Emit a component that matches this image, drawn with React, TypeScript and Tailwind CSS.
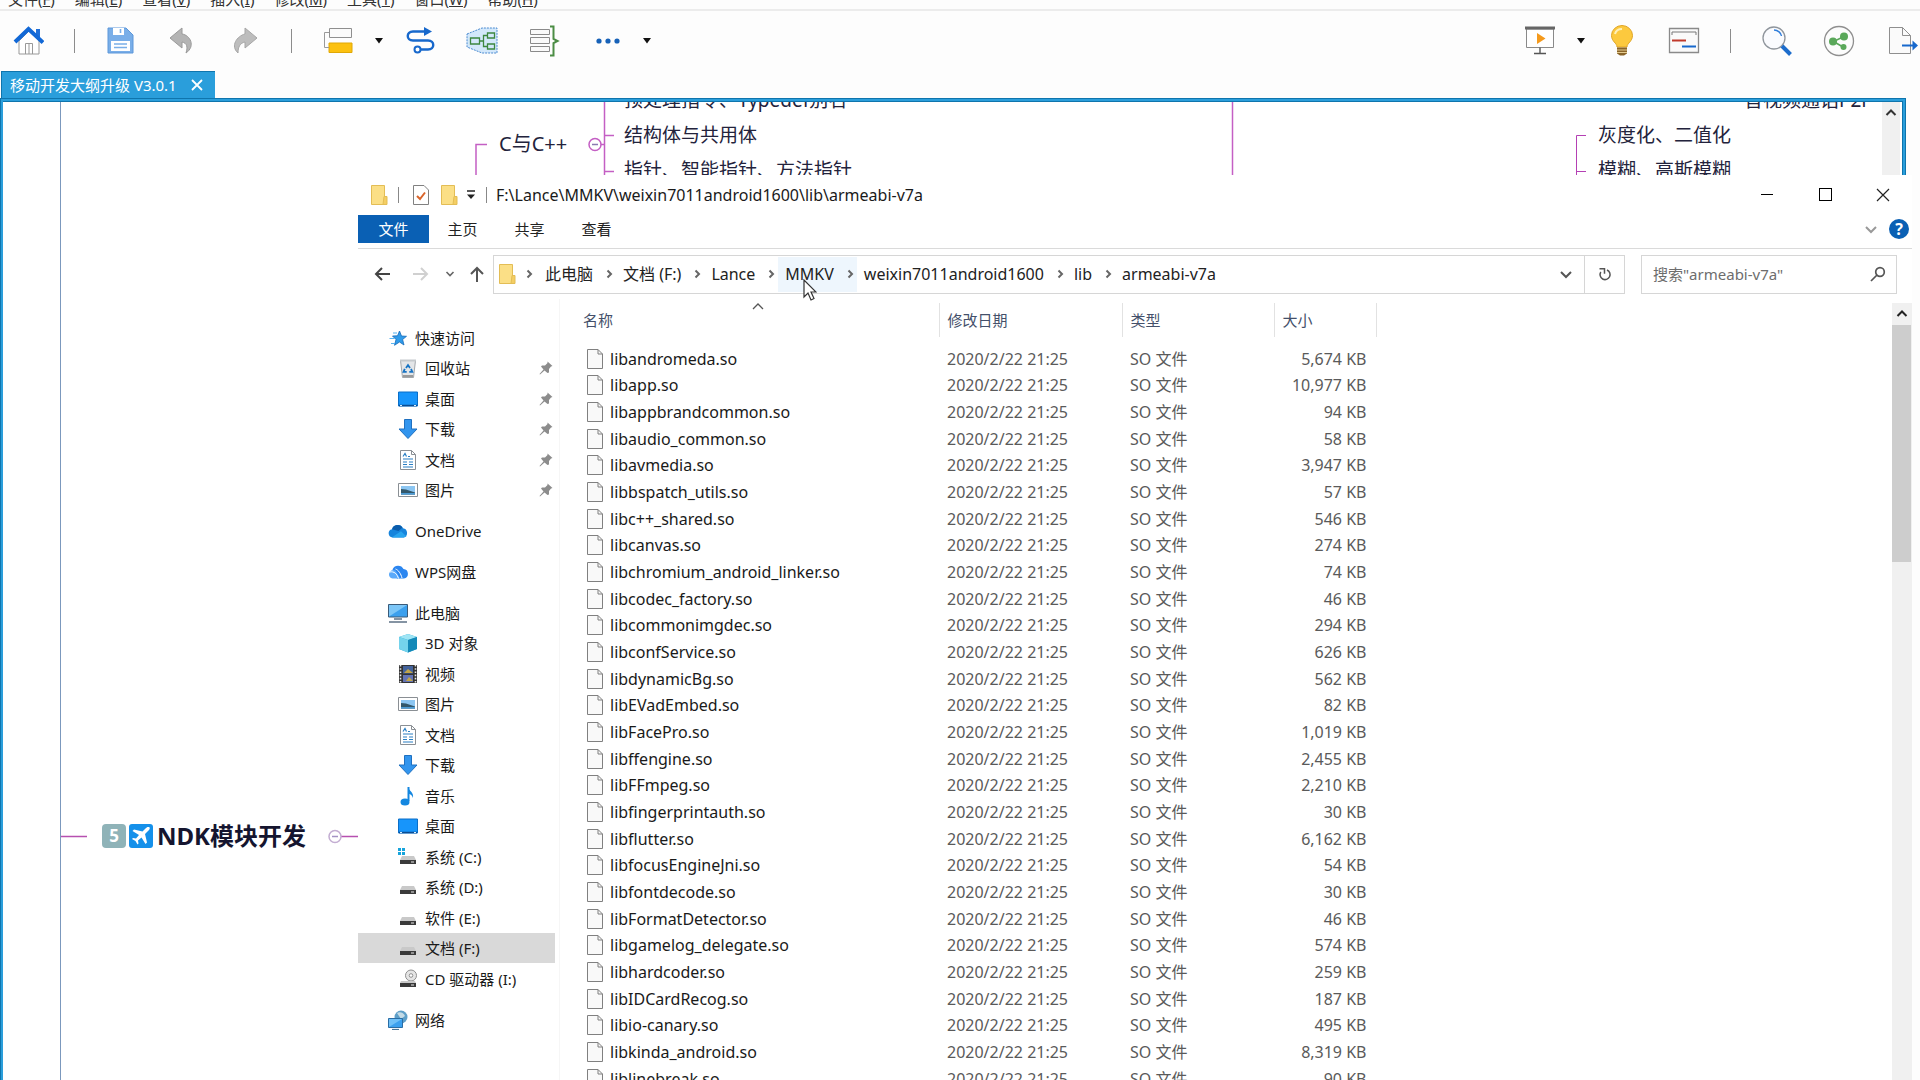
import type { ReactNode } from "react";

const menus = [
  ["文件", "F"],
  ["编辑", "E"],
  ["查看", "V"],
  ["插入", "I"],
  ["修改", "M"],
  ["工具", "T"],
  ["窗口", "W"],
  ["帮助", "H"],
];

const files = [
  ["libandromeda.so", "5,674"],
  ["libapp.so", "10,977"],
  ["libappbrandcommon.so", "94"],
  ["libaudio_common.so", "58"],
  ["libavmedia.so", "3,947"],
  ["libbspatch_utils.so", "57"],
  ["libc++_shared.so", "546"],
  ["libcanvas.so", "274"],
  ["libchromium_android_linker.so", "74"],
  ["libcodec_factory.so", "46"],
  ["libcommonimgdec.so", "294"],
  ["libconfService.so", "626"],
  ["libdynamicBg.so", "562"],
  ["libEVadEmbed.so", "82"],
  ["libFacePro.so", "1,019"],
  ["libffengine.so", "2,455"],
  ["libFFmpeg.so", "2,210"],
  ["libfingerprintauth.so", "30"],
  ["libflutter.so", "6,162"],
  ["libfocusEngineJni.so", "54"],
  ["libfontdecode.so", "30"],
  ["libFormatDetector.so", "46"],
  ["libgamelog_delegate.so", "574"],
  ["libhardcoder.so", "259"],
  ["libIDCardRecog.so", "187"],
  ["libio-canary.so", "495"],
  ["libkinda_android.so", "8,319"],
  ["liblinebreak.so", "90"],
];

type SideItem = { label: string; icon: string; pinned?: boolean; selected?: boolean };

// the first item of every group is its root, the others are indented
const groups: SideItem[][] = [
  [
    { label: "快速访问", icon: "star" },
    { label: "回收站", icon: "bin", pinned: true },
    { label: "桌面", icon: "desktop", pinned: true },
    { label: "下载", icon: "download", pinned: true },
    { label: "文档", icon: "doc", pinned: true },
    { label: "图片", icon: "picture", pinned: true },
  ],
  [{ label: "OneDrive", icon: "onedrive" }],
  [{ label: "WPS网盘", icon: "wps" }],
  [
    { label: "此电脑", icon: "pc" },
    { label: "3D 对象", icon: "cube" },
    { label: "视频", icon: "video" },
    { label: "图片", icon: "picture" },
    { label: "文档", icon: "doc" },
    { label: "下载", icon: "download" },
    { label: "音乐", icon: "music" },
    { label: "桌面", icon: "desktop" },
    { label: "系统 (C:)", icon: "windrive" },
    { label: "系统 (D:)", icon: "drive" },
    { label: "软件 (E:)", icon: "drive" },
    { label: "文档 (F:)", icon: "drive", selected: true },
    { label: "CD 驱动器 (I:)", icon: "cd" },
  ],
  [{ label: "网络", icon: "network" }],
];

const crumbs = ["此电脑", "文档 (F:)", "Lance", "MMKV", "weixin7011android1600", "lib", "armeabi-v7a"];

function Drive() {
  return (
    <>
      <path d="M4 9h12l2 4H2z" fill="#c9c9c9" />
      <path d="M2 13h16v4H2z" fill="#3a3a3a" />
      <path d="M13 15h3" stroke="#e8e8e8" />
    </>
  );
}

const sideIcons: Record<string, ReactNode> = {
  star: (
    <>
      <path d="M11.500 3l2 5 5 .3-3.9 3.200 1.400 5.500-4.500-3-5 3.300 1.500-5.800L4.500 8l5-.2z" fill="#2f9bea" stroke="#1669b8" strokeWidth="0.8" />
      <path d="M5 5h4M1.500 10.500h5M3 15.500h4" stroke="#57b2f0" strokeWidth="1.2" />
    </>
  ),
  bin: (
    <>
      <path d="M2.500 2.500h15l-2 17h-11z" fill="#e4e6e8" stroke="#a3a7ab" />
      <path d="M2 1.500h16v2H2z" fill="#c5c9cc" />
      <path d="M8 10l2-3 2 3M13 11l1.300 2.800h-3M6.800 10.800l-1.300 3h3.200" fill="none" stroke="#1673c4" strokeWidth="1.800" />
      <path d="M5 18h10" stroke="#9b9b9b" strokeWidth="2" />
    </>
  ),
  desktop: (
    <>
      <path d="M.500 3h19v14H.500z" fill="#1795fb" stroke="#0b6fc8" />
      <path d="M1 16.500h18" stroke="#0b4c92" strokeWidth="1.5" />
      <path d="M2 16.500h2M16 16.500h2" stroke="#d8efff" />
    </>
  ),
  download: <path d="M6.500.500h7v9.500h5.500L10 19.500 1 10h5.500z" fill="#3295ee" stroke="#1f70c0" />,
  doc: (
    <>
      <path d="M2.500.500h11l4 4v15h-15z" fill="#fff" stroke="#8a8f94" />
      <path d="M13.500.500v4h4" fill="none" stroke="#8a8f94" />
      <path d="M5 6.500l2-3 1.500 3M10 6.500h2M5 9h10M5 12h4M11 12h4M5 14.500h4M11 14.500h4M5 17h10" fill="none" stroke="#2a7fc4" strokeWidth="1.200" />
    </>
  ),
  picture: (
    <>
      <path d="M.500 3.500h19v13H.500z" fill="#fff" stroke="#8a8f94" />
      <path d="M3 6h14v8.500H3z" fill="#8cc6f2" />
      <path d="M3 9l5 .500 9 3v2H3z" fill="#33586b" />
      <path d="M3 13h14v1.500H3z" fill="#4b9bd6" />
    </>
  ),
  onedrive: (
    <>
      <path d="M4.500 16.500a4.200 4.200 0 0 1-.500-8.300 6 6 0 0 1 11-1 4.800 4.800 0 0 1 .800 9.300z" fill="#1684dc" />
      <path d="M4 8.200a6 6 0 0 1 10.500-1.800l-4 3.600z" fill="#0a5cab" />
      <path d="M4 16.300l9-6 5.500 5.200-2.700 1H5z" fill="#28a4ee" />
    </>
  ),
  wps: (
    <>
      <path d="M9 16.500L4.500 7.500a6 6 0 0 1 11-.500 4.800 4.800 0 0 1 .500 9.500z" fill="#2b86f0" />
      <path d="M1 12a4.500 4.500 0 0 1 6.500-3.500L12 16.500H4.500A4 4 0 0 1 1 12z" fill="#5aa9fa" />
      <path d="M1.500 10c5-1 7.500 2 9 6.500M7.500 7c3 1 5.500 5 6.500 9" fill="none" stroke="#fff" strokeWidth="1" />
    </>
  ),
  pc: (
    <>
      <path d="M.500 1.500h19v12.500H.500z" fill="#3ba0ee" stroke="#3a5a78" />
      <path d="M1 2h18L1 13.500z" fill="#7cc6f7" />
      <path d="M6 16h8M1 19h18" stroke="#5d7285" strokeWidth="1.3" />
    </>
  ),
  cube: (
    <>
      <path d="M1 4l9-3 9 3v12l-9 3.500L1 16z" fill="#28a8d4" />
      <path d="M1 4l9 3 9-3-9-3z" fill="#9fe5f5" />
      <path d="M1 4l9 3v12.500L1 16z" fill="#74d3ec" />
      <path d="M10 7l9-3v12l-9 3.500z" fill="#1489b8" />
    </>
  ),
  video: (
    <>
      <path d="M1 1h18v18H1z" fill="#333" />
      <path d="M2.500 1v18M17.500 1v18" stroke="#e8e8e8" strokeWidth="1.6" strokeDasharray="1.6 1.6" />
      <path d="M5 2h10v7.500H5z" fill="#44639c" />
      <path d="M5 11h10v7H5z" fill="#6474b4" />
      <path d="M6 9l4-4 5 4zM8 17l3-4 4 4z" fill="#c2a548" />
    </>
  ),
  music: (
    <>
      <path d="M10.500 1v14" stroke="#1487e0" strokeWidth="2" />
      <path d="M10 1c1 4 6 5 5 11-1-3-3-4-5-4.500z" fill="#1487e0" />
      <ellipse cx="7" cy="16" rx="4.500" ry="3.500" fill="#1487e0" />
    </>
  ),
  drive: <Drive />,
  windrive: (
    <>
      <Drive />
      <path d="M0 1h3v3H0zM4 1h3v3H4zM0 5h3v3H0zM4 5h3v3H4z" fill="#16a4dc" />
    </>
  ),
  cd: (
    <>
      <circle cx="13" cy="6.500" r="5.500" fill="#e5e5e5" stroke="#8f8f8f" />
      <circle cx="13" cy="6.500" r="1.800" fill="#fff" stroke="#8f8f8f" />
      <path d="M3 12h14l1 2H2z" fill="#c9c9c9" />
      <path d="M2 14h16v4H2z" fill="#3a3a3a" />
      <path d="M13 16h3" stroke="#e8e8e8" />
    </>
  ),
  network: (
    <>
      <circle cx="13" cy="7" r="6.500" fill="#5e9fc8" />
      <path d="M9 3c3-2 7 0 8 3l-4 3z" fill="#c4dbe6" />
      <path d="M.500 8.500h14v9H.500z" fill="#3ba0ee" stroke="#2a6da4" />
      <path d="M1 9h13L1 17z" fill="#6fc0f7" />
      <path d="M4 19.500h7" stroke="#4a7597" strokeWidth="1.2" />
    </>
  ),
};

function ToolButton({ label, children }: { label: string; children: ReactNode }) {
  return (
    <button aria-label={label} className="size-8 shrink-0">
      <svg viewBox="0 0 32 32" className="size-8" fill="none">
        {children}
      </svg>
    </button>
  );
}

function Caret({ label }: { label: string }) {
  return (
    <button aria-label={label} className="-mx-[10px] w-[10px] shrink-0">
      <svg viewBox="0 0 10 6" className="h-[6px] w-[10px]">
        <path d="M1 0h8L5 5.500z" fill="#111" />
      </svg>
    </button>
  );
}

function Separator() {
  return <span className="h-6 w-px shrink-0 bg-[#8c8c8c]" />;
}

function Folder() {
  return (
    <svg viewBox="0 0 18 22" className="h-[22px] w-[18px] shrink-0">
      <path d="M1.500 1.500h13v19h-13z" fill="#fbdf86" stroke="#e3bd55" />
      <path d="M14 12.500h3v8h-4z" fill="#f4ce63" stroke="#e3bd55" />
    </svg>
  );
}

function Chevron({ dir, className = "" }: { dir: "up" | "down" | "right"; className?: string }) {
  const d = { up: "M2.500 9L7 4.500 11.500 9", down: "M2 5l5 5 5-5", right: "M5.500 3.500L9 7l-3.500 3.500" }[dir];
  return (
    <svg viewBox="0 0 14 14" className={`size-[14px] shrink-0 ${className}`} fill="none" stroke="currentColor">
      <path d={d} strokeWidth="2" />
    </svg>
  );
}

function Toolbar() {
  return (
    <div className="flex h-[60px] shrink-0 items-center justify-between pl-3">
      <div className="flex items-center gap-[30px]">
        <ToolButton label="主页">
          <path d="M7 16v13h20V16L17 6z" fill="#fff" stroke="#999" />
          <path d="M13.500 29V18.500h7V29M17 18.500V29" stroke="#999" />
          <path d="M24 4h4v8h-4z" fill="#1f6fd8" />
          <path d="M3 17L16.500 4 31 17.500" stroke="#1268d6" strokeWidth="4" />
        </ToolButton>
        <Separator />
        <ToolButton label="保存">
          <path d="M3 3h18l7 7v18H3z" fill="#79aee8" stroke="#5c97da" />
          <path d="M8 3h11v7H8zM6 16h19v10H6z" fill="#fff" />
          <path d="M15.500 4v4M9 19h13M9 22.500h13" stroke="#79aee8" strokeWidth="1.6" />
        </ToolButton>
        <ToolButton label="撤销">
          <path d="M3 13L15 3v6c8 1 14 12 4 19 2-6 1-10-4-11v6z" fill="#b4b4b4" stroke="#9a9a9a" />
        </ToolButton>
        <ToolButton label="重做">
          <path d="M28 13L16 3v6C8 11 1 21 9 28c0-6 2-10 7-11v6z" fill="#bdbdbd" stroke="#a6a6a6" />
        </ToolButton>
        <Separator />
        <ToolButton label="主题">
          <path d="M7.500 3.500h22v9h-22z" fill="#fafafa" stroke="#8f8f8f" />
          <path d="M7 18h23v9.500H7z" fill="#fcc110" stroke="#e0a806" />
          <path d="M7 7.500H2.500v15H7" stroke="#9a9a9a" />
        </ToolButton>
        <Caret label="主题选项" />
        <ToolButton label="联系">
          <path d="M24 6.500H9c-7 0-7 9 0 9h15c7 0 7 9 0 9h-8" stroke="#1768cc" strokeWidth="2.400" />
          <path d="M20 2l8 4.500-8 4.500z" fill="#1768cc" />
          <circle cx="13.500" cy="24.500" r="3" fill="#fff" stroke="#1768cc" strokeWidth="2" />
        </ToolButton>
        <ToolButton label="外框">
          <path d="M1 9L16 3h15v25H16L1 22z" fill="#d3e8fb" stroke="#4a8ad0" strokeDasharray="2 1" />
          <path d="M4.500 13h9v6h-9zM21.500 8h7v5h-7zM21.500 19h7v5h-7zM13.500 16h4M21 10.500h-3.500v11H21" stroke="#3d8740" strokeWidth="1.300" />
        </ToolButton>
        <ToolButton label="概要">
          <path d="M2.500 4.500h19v5h-19zM2.500 12.500h19v6h-19zM2.500 21.500h19v5h-19z" fill="#fafafa" stroke="#8a8a8a" />
          <path d="M22 1.500h3.500v12.500l4 2-4 2v12.500H22" stroke="#4c8d45" strokeWidth="2" />
        </ToolButton>
        <ToolButton label="更多">
          <circle cx="9" cy="16" r="2.600" fill="#1762b8" />
          <circle cx="18" cy="16" r="2.600" fill="#1762b8" />
          <circle cx="27" cy="16" r="2.600" fill="#1762b8" />
        </ToolButton>
        <Caret label="更多选项" />
      </div>
      <div className="flex items-center gap-[30px]">
        <ToolButton label="演示">
          <path d="M2.500 4h27v18.500h-27z" fill="#fff" stroke="#8a8a8a" />
          <path d="M1 1.500h30v3H1z" fill="#666" />
          <path d="M13 8l8.500 5.500L13 19z" fill="#f59a1c" />
          <path d="M16 22.500v6M10 28.500h12" stroke="#555" strokeWidth="1.400" />
        </ToolButton>
        <Caret label="演示选项" />
        <ToolButton label="头脑风暴">
          <path d="M11 22c0-4-5.500-5.500-5.500-11.500a10.500 10 0 0 1 21 0C26.500 16.500 21 18 21 22z" fill="#fcc93e" stroke="#e0a526" />
          <path d="M9 9c1-4 4-5 7-5" stroke="#fff0b8" strokeWidth="2" />
          <path d="M11 22.500h10v6l-3 2h-4l-3-2z" fill="#8a6428" />
          <path d="M11 25h10M11 27.500h10" stroke="#e5cc90" />
        </ToolButton>
        <ToolButton label="甘特图">
          <path d="M1.500 3.500h29v24h-29z" fill="#fafafa" stroke="#8a8a8a" strokeWidth="1.300" />
          <path d="M4 10V7h24v3" stroke="#777" />
          <path d="M4 15.500h14" stroke="#c0392b" strokeWidth="2" />
          <path d="M14 21.500h14" stroke="#1768cc" strokeWidth="2" />
        </ToolButton>
        <Separator />
        <ToolButton label="搜索">
          <circle cx="13" cy="13" r="11" fill="#fafbfe" stroke="#8f959c" strokeWidth="1.300" />
          <path d="M13 5c4 0 7 3 7.500 6" stroke="#2e7ddb" strokeWidth="1.400" />
          <path d="M21 21l8.500 8.500" stroke="#1d6dcc" strokeWidth="4" />
        </ToolButton>
        <div className="flex items-center gap-[33px]">
          <ToolButton label="分享">
            <circle cx="16" cy="16" r="14.500" fill="#fcfcfc" stroke="#8f8f8f" strokeWidth="1.300" />
            <path d="M21 11.500L10.500 16.500 20 22" stroke="#5aa85a" strokeWidth="1.600" />
            <circle cx="21" cy="11.500" r="4" fill="#5aa85a" />
            <circle cx="10" cy="16.500" r="4" fill="#5aa85a" />
            <circle cx="20.500" cy="22" r="3" fill="#5aa85a" />
          </ToolButton>
          <ToolButton label="导出">
            <path d="M1.500 2.500h13l8 8v18h-21z" fill="#fafafa" stroke="#8f8f8f" />
            <path d="M14.500 2.500v8h8" stroke="#8f8f8f" />
            <path d="M14 20.500h12" stroke="#1768cc" strokeWidth="2" />
            <path d="M24.500 15.500l5.500 5-5.500 5z" fill="#1768cc" />
          </ToolButton>
        </div>
      </div>
    </div>
  );
}

function MindMap() {
  return (
    <div className="absolute inset-0 overflow-hidden bg-white text-[19px] leading-7 text-[#23233c]">
      {/* branches */}
      <svg className="absolute inset-0 size-full" fill="none" stroke="#c45fc4">
        <path d="M57.500 0v2000" stroke="#7b98bd" />
        <path d="M58 734.500h26M338 734.500h40" stroke="#b650b0" strokeWidth="1.500" />
        <path d="M484 42.500h-11V200M601.500 0v200M602 33.500h9M602 69.500h9M587 42.500h14" strokeWidth="1.500" />
        <path d="M1229.500 0v200" strokeWidth="1.500" />
        <path d="M1583 33.500h-9.500V200M1574 69.500h9" stroke="#b440b4" />
        <circle cx="592" cy="42.500" r="6" fill="#fff" strokeWidth="1.500" />
        <path d="M589 42.500h6" stroke="#8a7ab0" strokeWidth="1.500" />
        <circle cx="332" cy="734.500" r="6" fill="#fff" stroke="#c3add2" strokeWidth="1.500" />
        <path d="M329 734.500h6" stroke="#a493c4" strokeWidth="1.500" />
      </svg>
      <span className="absolute left-[496px] top-7 whitespace-nowrap text-xl leading-7">C与C++</span>
      <ul className="absolute left-[621px] -top-4 whitespace-nowrap [&>li]:h-[35px]">
        <li>预处理指令、Typedef别名</li>
        <li>结构体与共用体</li>
        <li>指针、智能指针、方法指针</li>
      </ul>
      <span className="absolute left-[1741px] -top-4 whitespace-nowrap">音视频通话P2P</span>
      <ul className="absolute left-[1595px] top-[19px] whitespace-nowrap [&>li]:h-[35px]">
        <li>灰度化、二值化</li>
        <li>模糊、高斯模糊</li>
      </ul>
      <div className="absolute left-[99px] top-[720px] flex h-7 items-center gap-[3px]">
        <span className="flex size-6 items-center justify-center rounded bg-[#8fb3b8] text-[17px] font-bold text-white">5</span>
        <svg viewBox="0 0 24 24" className="size-6">
          <rect width="24" height="24" rx="3" fill="#1590ea" />
          <path d="M20.500 3.500c-1.500-1-3 0-4 1L13.500 7.500 5 5.500 3.500 7l6.500 4-3 3.500-3-.500-1 1 3.500 2 2 3.500 1-1-.500-3 3.500-3 4 6.500 1.500-1.500-2-8.500 3-3c1-1 2.500-2.500 1.500-4z" fill="#fff" />
        </svg>
        <span className="ml-px whitespace-nowrap text-2xl font-bold text-[#15152f]">NDK模块开发</span>
      </div>
      <div className="absolute inset-y-0 right-[2px] w-[18px] bg-[#f0f0f0]">
        <Chevron dir="up" className="mx-auto mt-1 text-[#333]" />
      </div>
    </div>
  );
}

function Sidebar() {
  return (
    <nav className="flex w-[202px] shrink-0 flex-col gap-[10px] border-r border-[#f6f6f6] pr-1 pt-[23px]">
      {groups.map((group, g) => (
        <ul key={g}>
          {group.map((item, i) => (
            <li key={i} className="odd:h-[31px] even:h-[30px]">
              <a
                href="#"
                className={`flex h-full items-center gap-[7px] whitespace-nowrap pr-[2px] ${i === 0 ? "pl-[30px]" : "pl-[40px]"} ${
                  item.selected ? "bg-[#d9d9d9]" : ""
                }`}
              >
                <svg viewBox="0 0 20 20" className="size-5 shrink-0" fill="none">
                  {sideIcons[item.icon]}
                </svg>
                <span className="flex-1">{item.label}</span>
                {item.pinned && (
                  <svg viewBox="0 0 14 14" className="size-[14px]">
                    <path d="M8.500.500L13.500 5l-1.500.500-2 2.500v3.500L8.500 12 5.500 9.500 1 13.500l-.500-.500L4.500 8.500 2 5.500 3 4.500h3L8.500 2z" fill="#8c8c8c" />
                  </svg>
                )}
              </a>
            </li>
          ))}
        </ul>
      ))}
    </nav>
  );
}

function FileTable() {
  return (
    <table className="ml-[15px] w-[802px] table-fixed border-collapse text-left">
      <thead className="text-[#44506a]">
        <tr className="h-[34px] [&>th]:border-r [&>th]:border-[#e2e2e2] [&>th]:pl-2 [&>th]:font-normal">
          <th className="relative w-[364px]">
            名称
            <svg viewBox="0 0 12 7" className="absolute left-[177px] top-0 h-[7px] w-3" fill="none">
              <path d="M1 6l5-5 5 5" stroke="#555" strokeWidth="1.300" />
            </svg>
          </th>
          <th className="w-[183px]">修改日期</th>
          <th className="w-[152px]">类型</th>
          <th>大小</th>
        </tr>
      </thead>
      <tbody className="text-base text-[#5a5a5a]">
        <tr className="h-2">
          <td colSpan={4} />
        </tr>
        {files.map(([name, size]) => (
          <tr key={name} className="h-[27px] nth-[3n]:h-[26px] [&>td]:p-0 [&>td]:leading-6">
            <td>
              <span className="flex items-center gap-[7px] pl-3 text-[#1a1a1a]">
                <svg viewBox="0 0 16 20" className="h-5 w-4 shrink-0">
                  <path d="M.500.500h10.500l4.500 4.500v14.500H.500z" fill="#f9f9f9" stroke="#808080" />
                  <path d="M11 .500v4.500h4.500" fill="none" stroke="#808080" />
                </svg>
                {name}
              </span>
            </td>
            <td>
              <span className="pl-2">2020/2/22 21:25</span>
            </td>
            <td>
              <span className="pl-2">SO 文件</span>
            </td>
            <td className="text-right">
              <span className="pr-[10px]">{size} KB</span>
            </td>
          </tr>
        ))}
      </tbody>
    </table>
  );
}

function Explorer() {
  return (
    <section className="absolute bottom-0 left-[358px] right-2 top-[175px] flex flex-col overflow-hidden bg-white">
      <header className="flex h-[39px] shrink-0 items-center">
        <div className="flex items-center pl-3">
          <Folder />
          <span className="ml-[10px] h-4 w-px bg-[#888]" />
          <svg viewBox="0 0 16 20" className="ml-[14px] h-5 w-4" fill="none">
            <path d="M.500.500h10.500l4.500 4.500v14.500H.500z" fill="#fff" stroke="#808080" />
            <path d="M4 11l3 3 5-6.500" stroke="#d9642a" strokeWidth="2" />
          </svg>
          <span className="ml-[11px]">
            <Folder />
          </span>
          <svg viewBox="0 0 10 10" className="ml-2 size-[10px]">
            <path d="M1 1h8" stroke="#222" strokeWidth="1.500" />
            <path d="M1 4.500h8L5 9z" fill="#222" />
          </svg>
          <span className="ml-[10px] h-4 w-px bg-[#888]" />
        </div>
        <h1 className="ml-[9px] flex-1 text-base text-[#1a1a1a]">F:\Lance\MMKV\weixin7011android1600\lib\armeabi-v7a</h1>
        <button aria-label="最小化" className="flex h-full w-[58px] items-center justify-center">
          <span className="h-px w-3 bg-black" />
        </button>
        <button aria-label="最大化" className="flex h-full w-[58px] items-center justify-center">
          <span className="size-[13px] border border-black" />
        </button>
        <button aria-label="关闭" className="flex h-full w-[58px] items-center justify-center">
          <svg viewBox="0 0 14 14" className="size-[14px]">
            <path d="M1 1l12 12M13 1L1 13" stroke="#222" strokeWidth="1.200" />
          </svg>
        </button>
      </header>

      <div className="flex h-[35px] shrink-0 items-center border-b border-[#dadada] pb-1 text-[#222]">
        <button className="h-7 w-[71px] bg-[#0a60b4] text-white">文件</button>
        <button className="w-[67px]">主页</button>
        <button className="w-[67px]">共享</button>
        <button className="w-[67px]">查看</button>
        <button aria-label="展开功能区" className="ml-auto mr-[11px] text-[#999]">
          <Chevron dir="down" />
        </button>
        <button aria-label="帮助" className="mr-[3px] size-5 rounded-full bg-[#0a60b4] text-base leading-5 font-bold text-white">
          ?
        </button>
      </div>

      <div className="flex h-[50px] shrink-0 items-center pr-[15px] text-[#222]">
        <div className="flex w-[135px] items-center pl-4">
          <button aria-label="后退">
            <svg viewBox="0 0 16 16" className="size-4" fill="none" stroke="#444" strokeWidth="2">
              <path d="M16 8H2M8 2L2 8l6 6" />
            </svg>
          </button>
          <button aria-label="前进" className="ml-[23px]">
            <svg viewBox="0 0 16 16" className="size-4" fill="none" stroke="#d0d0d0" strokeWidth="2">
              <path d="M0 8h14M8 2l6 6-6 6" />
            </svg>
          </button>
          <button aria-label="最近浏览的位置" className="ml-4">
            <svg viewBox="0 0 10 10" className="size-[10px]" fill="none" stroke="#666" strokeWidth="1.600">
              <path d="M1.500 3L5 6.500 8.500 3" />
            </svg>
          </button>
          <button aria-label="上移" className="ml-[14px]">
            <svg viewBox="0 0 16 16" className="size-4" fill="none" stroke="#555" strokeWidth="2">
              <path d="M8 16V2M2 8l6-6 6 6" />
            </svg>
          </button>
        </div>
        <div className="flex h-[39px] flex-1 items-center border border-[#d6d6d6]">
          <span className="ml-1">
            <Folder />
          </span>
          <Chevron dir="right" className="ml-[6px] text-[#666]" />
          <ol className="ml-[2px] flex h-full flex-1 items-center">
            {crumbs.map((crumb, i) => (
              <li
                key={crumb}
                className={`flex h-[35px] items-center gap-[9px] pl-[7px] ${crumb === "MMKV" ? "bg-[#eef6fd]" : ""}`}
              >
                <a href="#" className="text-base">
                  {crumb}
                </a>
                {i < crumbs.length - 1 && <Chevron dir="right" className="text-[#666]" />}
              </li>
            ))}
          </ol>
          <button aria-label="以前的位置" className="mr-[11px] text-[#555]">
            <Chevron dir="down" />
          </button>
          <button aria-label="刷新" className="flex h-full w-10 items-center justify-center border-l border-[#d6d6d6]">
            <svg viewBox="0 0 14 14" className="size-[14px]" fill="none" stroke="#555" strokeWidth="1.500">
              <path d="M9 3a5 5 0 1 1-6.200 2" />
              <path d="M1.500 1.800h5v5" />
            </svg>
          </button>
        </div>
        <label className="ml-4 flex h-[39px] w-[256px] items-center border border-[#d6d6d6] pl-[11px] pr-[10px]">
          <input
            type="text"
            aria-label="搜索"
            placeholder='搜索"armeabi-v7a"'
            className="min-w-0 flex-1 outline-none placeholder:text-[#6d6d6d]"
          />
          <svg viewBox="0 0 16 16" className="size-4" fill="none" stroke="#555" strokeWidth="1.700">
            <circle cx="10" cy="6" r="4.300" />
            <path d="M7 9l-6 6" />
          </svg>
        </label>
      </div>

      <div className="flex min-h-0 flex-1">
        <Sidebar />
        <div className="min-w-0 flex-1 overflow-hidden pt-1">
          <FileTable />
        </div>
        <div className="mt-1 w-5 shrink-0 bg-[#f0f0f0]">
          <div className="flex h-[22px] items-center justify-center text-[#222]">
            <Chevron dir="up" />
          </div>
          <div className="mr-px h-[237px] bg-[#cdcdcd]" />
        </div>
      </div>
    </section>
  );
}

export default function App() {
  return (
    <div className="relative flex h-screen flex-col overflow-hidden bg-[#fdfdfd] font-['Noto_Sans','Noto_Sans_CJK_SC',sans-serif] text-[15px] leading-5 text-[#1a1a1a]">
      <div className="flex h-[11px] shrink-0 items-end gap-5 overflow-hidden border-b-2 border-[#ececec] pl-2 text-[#333]">
        {menus.map(([label, key]) => (
          <button key={key} className="shrink-0 whitespace-nowrap">
            {label}(<u>{key}</u>)
          </button>
        ))}
      </div>
      <Toolbar />
      <div className="flex h-[27px] shrink-0 pl-px">
        <div className="flex items-center gap-[14px] border-l border-t border-[#0f75ad] bg-[#2a9edb] pl-2 pr-3 text-white">
          <button>移动开发大纲升级 V3.0.1</button>
          <button aria-label="关闭标签">
            <svg viewBox="0 0 12 12" className="size-3">
              <path d="M1 1l10 10M11 1L1 11" stroke="#fff" strokeWidth="1.800" />
            </svg>
          </button>
        </div>
      </div>
      <div className="mr-[14px] flex flex-1 border border-b-0 border-[#0f75ad] bg-[#2a9edb] pl-[2px] pr-[2px] pt-[2px]">
        <div className="relative flex-1 border-r border-t border-[#0f75ad]">
          <MindMap />
        </div>
      </div>
      <Explorer />
      {/* mouse pointer */}
      <svg viewBox="0 0 14 22" className="pointer-events-none absolute left-[803px] top-[279px] h-[22px] w-[14px]">
        <path d="M1 1v17l4-4 3 7 3-1.500-3-6.500h5z" fill="#fff" stroke="#333" strokeWidth="1.200" />
      </svg>
    </div>
  );
}
